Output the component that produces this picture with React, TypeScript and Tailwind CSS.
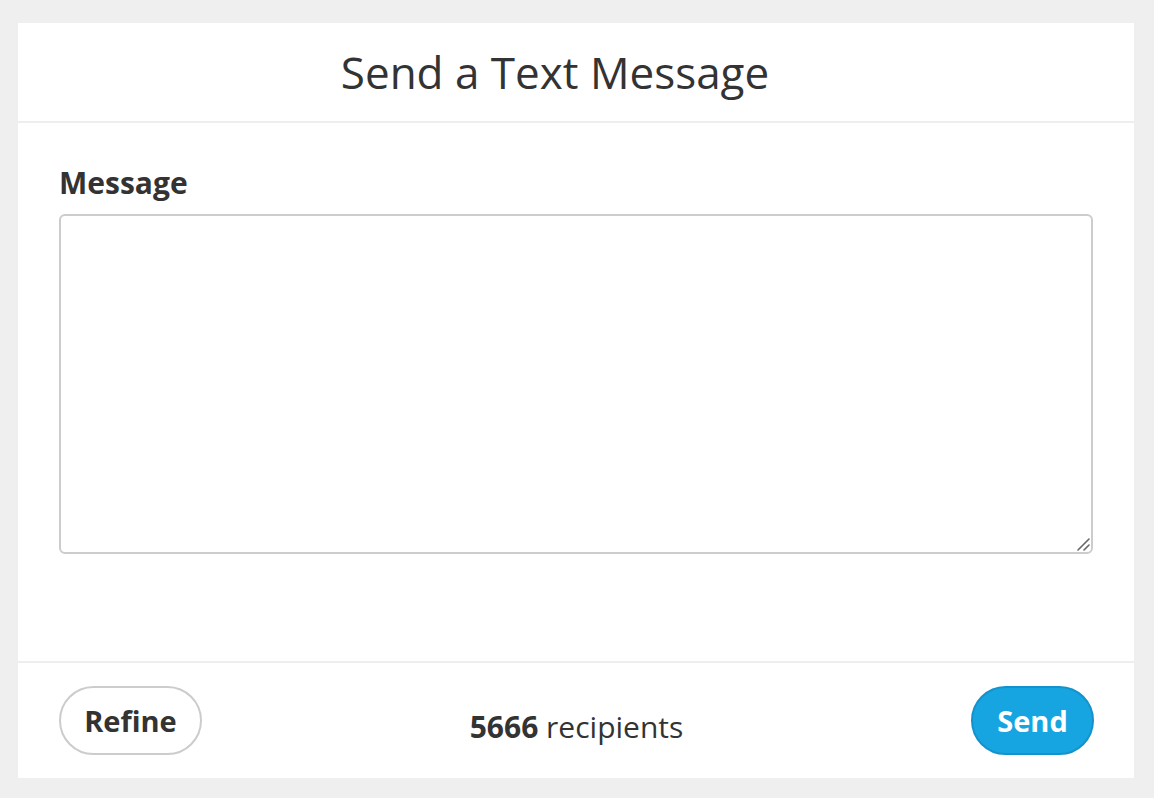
export default function App() {
  return (
    <div className="min-h-[798px] bg-[#efefef] pt-[23px] pr-[20px] pb-[20px] pl-[18px] font-['Open_Sans',sans-serif] text-[#333]">
      <div className="flex flex-col bg-white">
        <div className="flex h-[100px] items-center justify-center border-b-2 border-[#eeeeee] pr-[42px]">
          <h1 className="text-[44px] font-normal leading-none">Send a Text Message</h1>
        </div>

        <div className="flex h-[538px] flex-col px-[41px] pt-[41px]">
          <label className="mb-[12px] text-[30px] font-bold leading-[38px]">Message</label>
          <div className="relative h-[340px]">
            <textarea className="h-full w-full resize-none rounded-[6px] border-2 border-[#cccccc] p-3 text-[20px] outline-none" />
            <svg
              className="pointer-events-none absolute right-[3px] bottom-[3px]"
              width="14"
              height="14"
              viewBox="0 0 14 14"
            >
              <path d="M2 13 L13 2 M8 13 L13 8" stroke="#666" strokeWidth="1.6" strokeLinecap="round" />
            </svg>
          </div>
        </div>

        <div className="grid h-[117px] grid-cols-[1fr_auto_1fr] items-center border-t-2 border-[#eeeeee] pr-[40px] pl-[41px]">
          <div className="flex justify-start">
            <button
              type="button"
              className="h-[69px] w-[143px] rounded-full border-2 border-[#cccccc] bg-white text-[29px] font-bold text-[#333]"
            >
              Refine
            </button>
          </div>
          <div className="pt-[12px] text-[30px]">
            <span className="font-bold">5666</span> recipients
          </div>
          <div className="flex justify-end">
            <button
              type="button"
              className="h-[69px] w-[123px] rounded-full border-2 border-[#1592cc] bg-[#16a5e0] text-[29px] font-bold text-white"
            >
              Send
            </button>
          </div>
        </div>
      </div>
    </div>
  );
}
